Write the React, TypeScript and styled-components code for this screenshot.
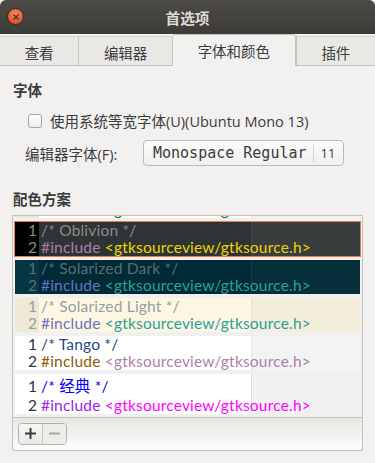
import { useLayoutEffect, useRef } from 'react';
import styled, { createGlobalStyle } from 'styled-components';

const UI_FONT = `'Open Sans', 'Noto Sans CJK SC', sans-serif`;
const CODE_FONT = `Lato, 'Noto Sans CJK SC', sans-serif`;

type Scheme = {
  key: string;
  title: string;
  bg: string;
  gutterBg: string;
  gutterFg: string;
  marginBg: string;
  marginLine: string;
  comment: string;
  pre: string;
  str: string;
  tall?: boolean;
};

const schemes: Scheme[] = [
  {
    key: 'kate',
    title: 'Kate',
    bg: '#ffffff',
    gutterBg: '#e8e8e7',
    gutterFg: '#a0a0a0',
    marginBg: '#f1f1f1',
    marginLine: '#dcdcdc',
    comment: '#898887',
    pre: '#006e28',
    str: '#006e28',
  },
  {
    key: 'oblivion',
    title: 'Oblivion',
    bg: '#2e3436',
    gutterBg: '#000000',
    gutterFg: '#888a85',
    marginBg: '#393d3e',
    marginLine: '#45494a',
    comment: '#888a85',
    pre: '#ad7fa8',
    str: '#edd400',
  },
  {
    key: 'sol-dark',
    title: 'Solarized Dark',
    bg: '#002b36',
    gutterBg: '#073642',
    gutterFg: '#586e75',
    marginBg: '#062f3a',
    marginLine: '#14404b',
    comment: '#586e75',
    pre: '#6c71c4',
    str: '#2aa198',
  },
  {
    key: 'sol-light',
    title: 'Solarized Light',
    bg: '#fdf6e3',
    gutterBg: '#eee8d5',
    gutterFg: '#93a1a1',
    marginBg: '#f3eedb',
    marginLine: '#e6e0cc',
    comment: '#93a1a1',
    pre: '#6c71c4',
    str: '#2aa198',
  },
  {
    key: 'tango',
    title: 'Tango',
    bg: '#ffffff',
    gutterBg: '#ffffff',
    gutterFg: '#2e3436',
    marginBg: '#f2f3f3',
    marginLine: '#e4e6e6',
    comment: '#204a87',
    pre: '#8f5902',
    str: '#ad7fa8',
  },
  {
    key: 'classic',
    title: '经典',
    bg: '#ffffff',
    gutterBg: '#ffffff',
    gutterFg: '#2e3436',
    marginBg: '#eff0f0',
    marginLine: '#dcdede',
    comment: '#0000ff',
    pre: '#a020f0',
    str: '#ff00ff',
    tall: true,
  },
];

const tabs = ['查看', '编辑器', '字体和颜色', '插件'];

const GlobalStyle = createGlobalStyle`
  html, body {
    margin: 0;
    padding: 0;
    background: #f2f1f0;
  }
  body {
    font-family: ${UI_FONT};
    color: #3c3c3c;
  }
`;

export default function App() {
  const listRef = useRef<HTMLDivElement>(null);

  // the list is scrolled a little, so only the tail of the first scheme shows
  useLayoutEffect(() => {
    if (listRef.current) listRef.current.scrollTop = 36;
  }, []);

  return (
    <>
      <GlobalStyle />
      <Window>
        <TitleBar>
          <CloseButton aria-label="关闭">
            <svg width="6" height="6" viewBox="0 0 6 6">
              <path d="M0.5 0.5 L5.5 5.5 M5.5 0.5 L0.5 5.5" stroke="#3a3935" strokeWidth="1.4" />
            </svg>
          </CloseButton>
          <Title>首选项</Title>
        </TitleBar>

        <TabBar>
          {tabs.map((t, i) => (
            <Tab key={t} $active={i === 2}>
              {t}
            </Tab>
          ))}
        </TabBar>

        <Content>
          <Heading>字体</Heading>
          <CheckRow>
            <CheckBox />
            <span>使用系统等宽字体(U)(Ubuntu Mono 13)</span>
          </CheckRow>
          <FontRow>
            <span>编辑器字体(F):</span>
            <FontButton>
              <FontName>Monospace Regular</FontName>
              <FontSize>11</FontSize>
            </FontButton>
          </FontRow>

          <SchemeHeading>配色方案</SchemeHeading>
          <SchemeList ref={listRef}>
            {schemes.map((s) => (
              <SchemeRow key={s.key} $s={s} $selected={s.key === 'oblivion'}>
                <Gutter $s={s}>
                  <LineNo $tall={s.tall}>1</LineNo>
                  <LineNo>2</LineNo>
                </Gutter>
                <Code $s={s}>
                  <CodeLine $tall={s.tall} style={{ color: s.comment }}>
                    /* {s.title} */
                  </CodeLine>
                  <CodeLine>
                    <span style={{ color: s.pre }}>#include </span>
                    <span style={{ color: s.str }}>&lt;gtksourceview/gtksource.h&gt;</span>
                  </CodeLine>
                </Code>
              </SchemeRow>
            ))}
          </SchemeList>
          <ListToolbar>
            <LinkedButtons>
              <ToolButton aria-label="添加">
                <svg width="11" height="11" viewBox="0 0 11 11">
                  <path d="M0 5.5 H11 M5.5 0 V11" stroke="#3c3c3c" strokeWidth="2" />
                </svg>
              </ToolButton>
              <ToolButton $disabled aria-label="删除">
                <svg width="11" height="11" viewBox="0 0 11 11">
                  <path d="M0 5.5 H11" stroke="#a9a8a5" strokeWidth="2" />
                </svg>
              </ToolButton>
            </LinkedButtons>
          </ListToolbar>
        </Content>
      </Window>
    </>
  );
}

const Window = styled.div`
  width: 375px;
  height: 463px;
  display: flex;
  flex-direction: column;
  background: #f2f1f0;
  overflow: hidden;
`;

const TitleBar = styled.div`
  position: relative;
  height: 34px;
  display: flex;
  align-items: center;
  justify-content: center;
  background: linear-gradient(#4c4b46, #3c3b37);
  border-radius: 6px 6px 0 0;
  flex-shrink: 0;
`;

const CloseButton = styled.div`
  position: absolute;
  left: 7px;
  top: 8px;
  width: 17px;
  height: 17px;
  box-sizing: border-box;
  border-radius: 50%;
  display: flex;
  align-items: center;
  justify-content: center;
  background: radial-gradient(circle at 50% 35%, #f7875c, #e0562a 70%);
  border: 1px solid #2e2d29;
`;

const Title = styled.div`
  font-family: 'Noto Sans CJK SC', sans-serif;
  font-size: 14.67px;
  font-weight: bold;
  color: #dfdbd2;
`;

const TabBar = styled.div`
  display: flex;
  align-items: flex-end;
  height: 32px;
  flex-shrink: 0;
`;

const Tab = styled.div<{ $active?: boolean }>`
  flex: 1 1 auto;
  height: ${(p) => (p.$active ? 32 : 30)}px;
  box-sizing: border-box;
  display: flex;
  align-items: center;
  justify-content: center;
  padding-top: ${(p) => (p.$active ? 0 : 2)}px;
  font-family: 'Noto Sans CJK SC', sans-serif;
  font-size: 14.5px;
  color: #3c3c3c;
  background: ${(p) => (p.$active ? '#f2f1f0' : '#e9e8e5')};
  border: 1px solid ${(p) => (p.$active ? '#c4c2bd' : '#d3d1cc')};
  border-bottom: ${(p) => (p.$active ? 'none' : '1px solid #c4c2bd')};
  border-left-width: ${(p) => (p.$active ? 1 : 0)}px;
  border-right-width: ${(p) => (p.$active ? 1 : 0)}px;
  border-radius: ${(p) => (p.$active ? '4px 4px 0 0' : '0')};

  & + & {
    border-left: ${(p) => (p.$active ? '1px solid #c4c2bd' : '1px solid #d3d1cc')};
  }
`;

const Content = styled.div`
  display: flex;
  flex-direction: column;
  padding: 0 12px;
`;

const Heading = styled.div`
  margin-top: 15px;
  padding-left: 1px;
  font-family: 'Noto Sans CJK SC', sans-serif;
  font-size: 14.5px;
  font-weight: bold;
  line-height: 18px;
`;

const SchemeHeading = styled(Heading)`
  margin-top: 24px;
`;

const CheckRow = styled.label`
  margin-top: 11px;
  padding-left: 16px;
  display: flex;
  align-items: center;
  gap: 8px;
  height: 21px;
  font-size: 14.5px;
`;

const CheckBox = styled.span`
  width: 14px;
  height: 14px;
  box-sizing: border-box;
  border: 1px solid #a7a5a0;
  border-radius: 3px;
  background: linear-gradient(#ffffff, #ecebe8);
`;

const FontRow = styled.div`
  margin-top: 9px;
  padding-left: 13px;
  display: flex;
  align-items: center;
  font-size: 14.5px;
`;

const FontButton = styled.div`
  width: 201px;
  height: 26px;
  box-sizing: border-box;
  display: flex;
  align-items: center;
  border: 1px solid #bcbab5;
  border-radius: 4px;
  background: linear-gradient(#fbfbfa, #f0efed);
  margin-left: auto;
  margin-right: 19px;
`;

const FontName = styled.span`
  padding: 0 6px 0 9px;
  font-family: 'DejaVu Sans Mono', monospace;
  font-size: 15px;
  color: #3c3c3c;
  border-right: 1px solid #d6d4cf;
  line-height: 18px;
`;

const FontSize = styled.span`
  padding-left: 7px;
  font-size: 13px;
`;

const SchemeList = styled.div`
  margin-top: 7px;
  height: 203px;
  box-sizing: border-box;
  border: 1px solid #c4c2bd;
  background: #f0f0ef;
  padding: 4px 2px 3px;
  display: flex;
  flex-direction: column;
  gap: 4px;
  overflow: hidden;
`;

const SchemeRow = styled.div<{ $s: Scheme; $selected?: boolean }>`
  display: flex;
  flex-shrink: 0;
  background: ${(p) => p.$s.bg};
  box-shadow: ${(p) => (p.$selected ? '0 0 0 1px #f07746, inset 0 0 0 1px #f07746' : 'none')};
`;

const Gutter = styled.div<{ $s: Scheme }>`
  width: 24px;
  flex-shrink: 0;
  box-sizing: border-box;
  padding-right: 2px;
  text-align: right;
  background: ${(p) => p.$s.gutterBg};
  color: ${(p) => p.$s.gutterFg};
  font-family: ${CODE_FONT};
  font-size: 15.5px;
`;

const LineNo = styled.div<{ $tall?: boolean }>`
  line-height: ${(p) => (p.$tall ? 21 : 17)}px;
  padding-top: ${(p) => (p.$tall ? 2 : 0)}px;
`;

const Code = styled.div<{ $s: Scheme }>`
  flex: 1;
  padding-left: 2px;
  font-family: ${CODE_FONT};
  font-size: 15.5px;
  letter-spacing: 0.2px;
  white-space: nowrap;
  overflow: hidden;
  background: linear-gradient(
    to right,
    ${(p) => p.$s.bg} 212px,
    ${(p) => p.$s.marginLine} 212px,
    ${(p) => p.$s.marginLine} 213px,
    ${(p) => p.$s.marginBg} 213px
  );
`;

const CodeLine = styled.div<{ $tall?: boolean }>`
  line-height: ${(p) => (p.$tall ? 21 : 17)}px;
  padding-top: ${(p) => (p.$tall ? 2 : 0)}px;
`;

const ListToolbar = styled.div`
  height: 33px;
  box-sizing: border-box;
  border: 1px solid #c4c2bd;
  border-top: none;
  border-radius: 0 0 3px 3px;
  background: linear-gradient(#e7e6e3, #fdfdfd);
  padding: 4px 5px;
`;

const LinkedButtons = styled.div`
  display: inline-flex;
  border: 1px solid #b3b1ac;
  border-radius: 4px;
  overflow: hidden;
`;

const ToolButton = styled.div<{ $disabled?: boolean }>`
  width: 23px;
  height: 20px;
  display: flex;
  align-items: center;
  justify-content: center;
  background: ${(p) => (p.$disabled ? '#edece9' : 'linear-gradient(#f7f7f6, #e8e7e4)')};

  & + & {
    border-left: 1px solid #c9c7c2;
  }
`;
